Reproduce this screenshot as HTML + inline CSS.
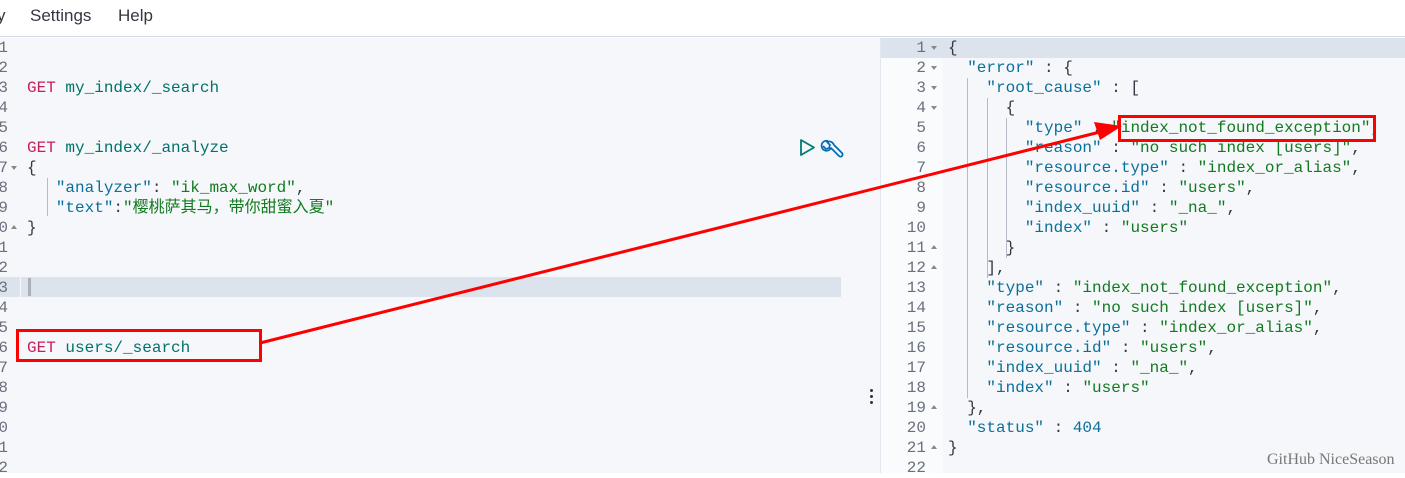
<!DOCTYPE html>
<html><head><meta charset="utf-8">
<style>
*{margin:0;padding:0;box-sizing:border-box}
body{width:1405px;height:473px;overflow:hidden;background:#fff;position:relative;font-family:"Liberation Sans",sans-serif}
.menu{position:absolute;left:0;top:0;width:1405px;height:37px;background:#fff;border-bottom:1px solid #d3dae6;font-size:17px;color:#343741}
.menu span{position:absolute;top:6px}
.ed{position:absolute;top:38px;bottom:0;background:#f5f7fa}
.code{font-family:"Liberation Mono","Noto Sans CJK SC",monospace;font-size:16px;line-height:20px;white-space:pre;position:absolute}
.ln{font-family:"Liberation Mono",monospace;font-size:16px;line-height:20px;color:#69707d;position:absolute;white-space:pre}
.g{color:#c61e5a}.p{color:#00726b}.k{color:#0b6f9b}.s{color:#127a1f}.d{color:#343741}.n{color:#0b6f9b}
.guide{position:absolute;width:1px;background:#b5bcc7}
.dn,.up{position:absolute;width:0;height:0;border-left:3.5px solid transparent;border-right:3.5px solid transparent}
.dn{border-top:4px solid #888}
.up{border-bottom:4px solid #888}
</style></head><body>
<div class="menu"><span style="left:-3px">y</span><span style="left:30px">Settings</span><span style="left:118px">Help</span></div>

<!-- left editor -->
<div class="ed" style="left:0;width:21px;background:#f5f7fa"></div>
<div class="ed" style="left:21px;width:841px;background:#f5f7fa"></div>
<div style="position:absolute;left:0;top:277px;width:20px;height:20px;background:#dde3ec"></div>
<div style="position:absolute;left:21px;top:277px;width:820px;height:20px;background:#dde3ec"></div>
<div style="position:absolute;left:28px;top:278px;width:3px;height:18px;background:#aab1bc"></div>
<div class="ln" style="left:-2px;top:38px;width:10px;overflow:hidden;text-align:right">1
2
3
4
5
6
7
8
9
0
1
2
3
4
5
6
7
8
9
0
1
2</div>
<div class="dn" style="left:11px;top:166px"></div>
<div class="up" style="left:11px;top:225px"></div>
<div class="guide" style="left:47px;top:178px;height:38px"></div>
<div class="code" style="left:27px;top:38px">

<span class="g">GET</span> <span class="p">my_index/_search</span>


<span class="g">GET</span> <span class="p">my_index/_analyze</span>
<span class="d">{</span>
   <span class="k">"analyzer"</span><span class="d">: </span><span class="s">"ik_max_word"</span><span class="d">,</span>
   <span class="k">"text"</span><span class="d">:</span><span class="s">"樱桃萨其马，带你甜蜜入夏"</span>
<span class="d">}</span>





<span class="g">GET</span> <span class="p">users/_search</span></div>
<svg style="position:absolute;left:798px;top:137px" width="48" height="24" viewBox="0 0 48 24">
<path d="M3 3 L16 10.5 L3 18 Z" fill="none" stroke="#017d73" stroke-width="1.8" stroke-linejoin="round"/>
<path d="M30 4 a5 5 0 1 0 3 7 l8 8 a2 2 0 0 0 3 -3 l-8 -8 a5 5 0 0 0 -7 -3 l3 3 -1 3 -3 1 -3 -3" fill="none" stroke="#006bb4" stroke-width="1.7" stroke-linejoin="round"/>
</svg>

<!-- splitter -->
<div style="position:absolute;left:862px;top:38px;width:18px;bottom:0;background:#f5f7fa"></div>
<div style="position:absolute;left:870px;top:389px;width:3px;height:3px;border-radius:2px;background:#333"></div>
<div style="position:absolute;left:870px;top:395px;width:3px;height:3px;border-radius:2px;background:#333"></div>
<div style="position:absolute;left:870px;top:401px;width:3px;height:3px;border-radius:2px;background:#333"></div>
<div style="position:absolute;left:880px;top:38px;width:1px;bottom:0;background:#e3e8f0"></div>

<!-- right -->
<div class="ed" style="left:881px;width:62px;background:#fafbfd"></div>
<div class="ed" style="left:943px;width:462px;background:#f5f7fa"></div>
<div style="position:absolute;left:881px;top:38px;width:524px;height:20px;background:#dde3ec"></div>
<div class="ln" style="left:888px;top:38px;width:38px;text-align:right">1
2
3
4
5
6
7
8
9
10
11
12
13
14
15
16
17
18
19
20
21
22</div>
<div class="dn" style="left:931px;top:46px"></div>
<div class="dn" style="left:931px;top:66px"></div>
<div class="dn" style="left:931px;top:86px"></div>
<div class="dn" style="left:931px;top:106px"></div>
<div class="up" style="left:931px;top:245px"></div>
<div class="up" style="left:931px;top:265px"></div>
<div class="up" style="left:931px;top:405px"></div>
<div class="up" style="left:931px;top:445px"></div>
<div class="guide" style="left:967px;top:78px;height:320px"></div>
<div class="guide" style="left:987px;top:98px;height:180px"></div>
<div class="guide" style="left:1006px;top:118px;height:140px"></div>
<div class="code" style="left:948px;top:38px"><span class="d">{</span>
  <span class="k">"error"</span><span class="d"> : {</span>
    <span class="k">"root_cause"</span><span class="d"> : [</span>
      <span class="d">{</span>
        <span class="k">"type"</span><span class="d"> : </span><span class="s">"index_not_found_exception"</span><span class="d">,</span>
        <span class="k">"reason"</span><span class="d"> : </span><span class="s">"no such index [users]"</span><span class="d">,</span>
        <span class="k">"resource.type"</span><span class="d"> : </span><span class="s">"index_or_alias"</span><span class="d">,</span>
        <span class="k">"resource.id"</span><span class="d"> : </span><span class="s">"users"</span><span class="d">,</span>
        <span class="k">"index_uuid"</span><span class="d"> : </span><span class="s">"_na_"</span><span class="d">,</span>
        <span class="k">"index"</span><span class="d"> : </span><span class="s">"users"</span>
      <span class="d">}</span>
    <span class="d">],</span>
    <span class="k">"type"</span><span class="d"> : </span><span class="s">"index_not_found_exception"</span><span class="d">,</span>
    <span class="k">"reason"</span><span class="d"> : </span><span class="s">"no such index [users]"</span><span class="d">,</span>
    <span class="k">"resource.type"</span><span class="d"> : </span><span class="s">"index_or_alias"</span><span class="d">,</span>
    <span class="k">"resource.id"</span><span class="d"> : </span><span class="s">"users"</span><span class="d">,</span>
    <span class="k">"index_uuid"</span><span class="d"> : </span><span class="s">"_na_"</span><span class="d">,</span>
    <span class="k">"index"</span><span class="d"> : </span><span class="s">"users"</span>
  <span class="d">},</span>
  <span class="k">"status"</span><span class="d"> : </span><span class="n">404</span>
<span class="d">}</span></div>

<div style="position:absolute;left:1267px;top:451px;font-family:'Liberation Serif',serif;font-size:16px;color:#777">GitHub NiceSeason</div>

<!-- annotations -->
<div style="position:absolute;left:16px;top:329px;width:246px;height:33px;border:3px solid #f00"></div>
<div style="position:absolute;left:1118px;top:115px;width:258px;height:27px;border:3px solid #f00"></div>
<svg style="position:absolute;left:0;top:0" width="1405" height="473">
<line x1="260" y1="343" x2="1100" y2="132" stroke="#f00" stroke-width="3"/>
<polygon points="1122,126 1094,122 1100,140" fill="#f00"/>
</svg>
</body></html>
